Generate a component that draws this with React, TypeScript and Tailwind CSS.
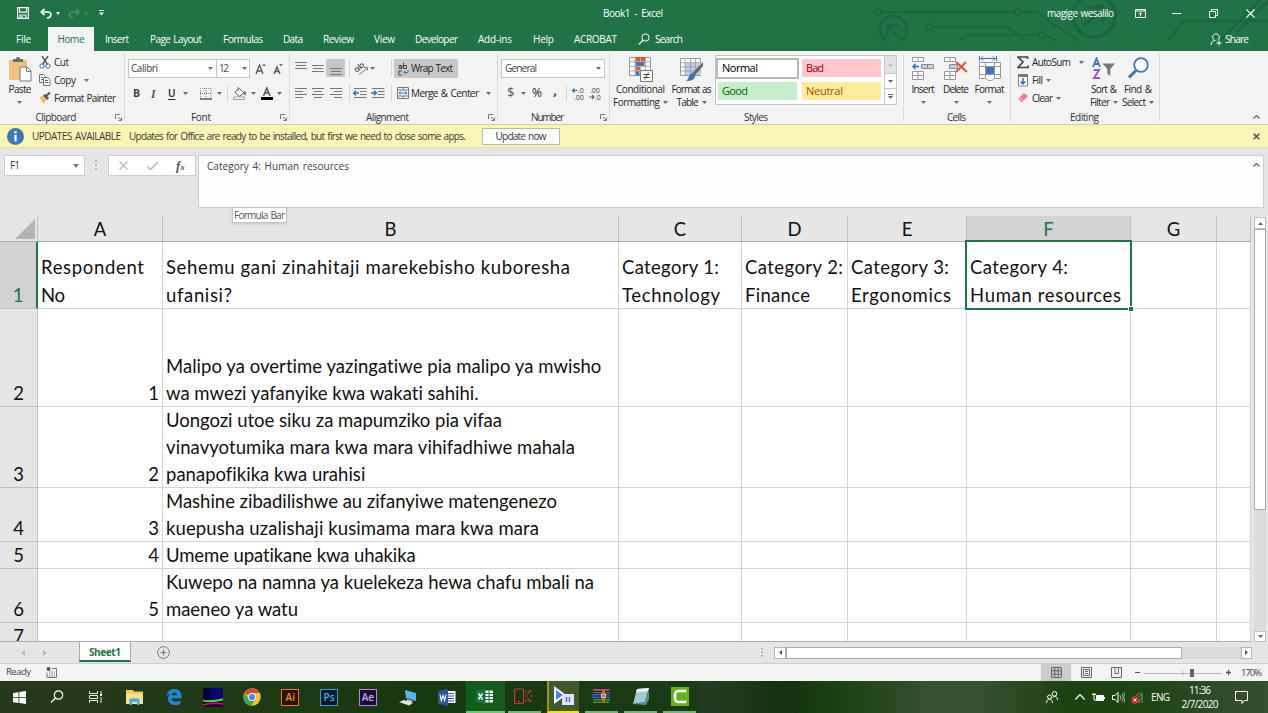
import { useLayoutEffect, useRef, type ReactNode } from "react";

const UI = "font-['Open_Sans','Noto_Sans',sans-serif]";

/** Single-line text whose tracking is adjusted so that it spans `w` pixels. */
function Fit({ w, children, className = "" }: { w: number; children: string; className?: string }) {
  const ref = useRef<HTMLSpanElement>(null);
  useLayoutEffect(() => {
    const el = ref.current;
    if (!el) return;
    el.style.letterSpacing = "0px";
    el.style.marginRight = "0px";
    const natural = el.getBoundingClientRect().width;
    const tracking = (w - natural) / Math.max(1, children.length - 1);
    if (children.length > 1) {
      el.style.letterSpacing = `${tracking}px`;
      el.style.marginRight = `${-tracking}px`;
    }
  }, [w, children]);
  return (
    <span ref={ref} className={`inline-block w-max shrink-0 whitespace-pre ${className}`}>
      {children}
    </span>
  );
}

function Svg({ w, h, children, className = "" }: { w: number; h: number; children: ReactNode; className?: string }) {
  return (
    <svg width={w} height={h} viewBox={`0 0 ${w} ${h}`} fill="none" className={`shrink-0 ${className}`}>
      {children}
    </svg>
  );
}

function Caret({ className = "" }: { className?: string }) {
  return (
    <Svg w={5} h={3} className={className}>
      <path d="M0 0h5L2.500 3z" fill="#6a6a6a" />
    </Svg>
  );
}

function Launcher() {
  return (
    <Svg w={7} h={7} className="absolute right-[3px] bottom-[3px]">
      <path d="M.5 5V.5H5M3 3l3 3M6.500 3.500v3h-3" stroke="#777" />
    </Svg>
  );
}

function Group({ className, label, w, launcher, children }: { className: string; label: string; w: number; launcher?: boolean; children: ReactNode }) {
  return (
    <section className={`relative flex h-[73px] shrink-0 flex-col ${className}`}>
      <div className="flex h-[59px] w-full">{children}</div>
      <div className={`flex h-[14px] items-center justify-center text-[#333] ${launcher ? "pr-[13px]" : "pr-[2px]"}`}>
        <Fit w={w}>{label}</Fit>
      </div>
      {launcher && <Launcher />}
      <div className="absolute top-[3px] right-0 h-[67px] w-px bg-[#dadada]" />
    </section>
  );
}

const Sep = ({ className = "" }: { className?: string }) => <div className={`h-[17px] w-px shrink-0 bg-[#d5d5d5] ${className}`} />;

/* ---------- title bar and tabs ---------- */

function Circuit() {
  return (
    <svg width="408" height="51" viewBox="0 0 408 51" fill="none" className="absolute top-0 right-0" stroke="#1d663d" strokeWidth="2">
      <circle cx="18" cy="12" r="3" />
      <path d="M21 12h134M161 12h12c8 0 12 5 16 9l30 20" />
      <circle cx="158" cy="12" r="3" />
      <path d="M26 41a13.500 13.500 0 1 1 15 0" strokeWidth="3" />
      <path d="M40 38 28 26M27 36V25h11" strokeWidth="3" />
      <circle cx="70" cy="27" r="3" />
      <path d="M73 27h73l20 13M100 40l8-5h71M185 35l12 6" />
      <circle cx="182" cy="35" r="3" />
      <circle cx="234" cy="16" r="21" strokeWidth="4" />
      <path d="m224 26 18-18M229 7h14v14" strokeWidth="4" />
      <path d="m307 41 17-20h84M360 41l40-41M378 31l30-30" strokeWidth="2.500" />
    </svg>
  );
}

const tabs: [string, number, string][] = [
  ["Insert", 24, "ml-[11px]"],
  ["Page Layout", 52, "ml-[21px]"],
  ["Formulas", 40, "ml-[21px]"],
  ["Data", 20, "ml-[20px]"],
  ["Review", 31, "ml-[20px]"],
  ["View", 21, "ml-[20px]"],
  ["Developer", 43, "ml-[20px]"],
  ["Add-ins", 34, "ml-[20px]"],
  ["Help", 21, "ml-[21px]"],
  ["ACROBAT", 43, "ml-[20px]"],
];

function TitleArea() {
  return (
    <header className="relative h-[51px] bg-[#217346] text-white">
      <Circuit />
      <div className="relative flex h-[26px] items-center pl-[17px]">
        <Svg w={12} h={12}>
          <path d="M.6.6h10.800v10.800H.6zM2.500.6v4.500h7V.6M3 11.400V8h6v3.400M5 9v2" stroke="#fff" strokeWidth="1.200" />
        </Svg>
        <Svg w={13} h={11} className="ml-[11px]">
          <path d="M4.500.8 1.300 4l3.200 3.200M1.500 4h6.300c4.500 0 4 5.500-.8 6" stroke="#fff" strokeWidth="1.700" />
        </Svg>
        <Svg w={4} h={3} className="ml-[3px]"><path d="M0 0h4L2 3z" fill="#fff" /></Svg>
        <Svg w={12} h={11} className="ml-[8px]">
          <path d="M8 .8 11 4 8 7.200M11 4H5C0 4 1 9 5 10" stroke="#4c8d68" strokeWidth="1.500" />
        </Svg>
        <Svg w={4} h={3} className="ml-[4px]"><path d="M0 0h4L2 3z" fill="#4c8d68" /></Svg>
        <Svg w={5} h={6} className="ml-[11px]"><path d="M0 .5h5" stroke="#fff" /><path d="M0 2.500h5L2.500 5.500z" fill="#fff" /></Svg>
        <div className="ml-[499px] text-[10px]"><Fit w={60}>Book1  -  Excel</Fit></div>
        <div className="ml-[384px] text-[10px] [word-spacing:1px]"><Fit w={67}>magige wesalilo</Fit></div>
        <Svg w={11} h={9} className="ml-[21px]">
          <path d="M.5.5h10v8H.5zM.5 2h10M5.500 7.500V4M4 5.200l1.500-1.500L7 5.200" stroke="#fff" />
        </Svg>
        <Svg w={9} h={9} className="ml-[26px]"><path d="M0 4.500h9" stroke="#fff" /></Svg>
        <Svg w={9} h={9} className="ml-[28px]"><path d="M.5 2.500h6v6h-6zM2.500 2.500v-2h6v6h-2" stroke="#fff" /></Svg>
        <Svg w={9} h={9} className="ml-[28px]"><path d="m.5.5 8 8m0-8-8 8" stroke="#fff" strokeWidth="1.100" /></Svg>
      </div>
      <nav className="relative mt-px flex h-[24px] items-center text-[10px] [word-spacing:1px]">
        <div className="ml-[16px]"><Fit w={15}>File</Fit></div>
        <div className="ml-[17px] flex h-full w-[46px] items-center justify-center bg-[#f3f3f3] text-[#217346]"><Fit w={27}>Home</Fit></div>
        {tabs.map(([t, w, ml]) => (
          <div key={t} className={ml}><Fit w={w}>{t}</Fit></div>
        ))}
        <Svg w={12} h={12} className="ml-[21px]">
          <circle cx="7.500" cy="4.500" r="3.600" stroke="#fff" /><path d="M5 7.200.8 11.400" stroke="#fff" strokeWidth="1.300" />
        </Svg>
        <div className="ml-[5px]"><Fit w={28}>Search</Fit></div>
        <Svg w={12} h={13} className="ml-[527px]">
          <path d="M5 7.500a3.400 3.400 0 1 1 2.500-.2M1 12c0-3 2-4.500 4.500-4.500M9 7.500v5M6.500 10h5" stroke="#fff" />
        </Svg>
        <div className="ml-[3px]"><Fit w={24}>Share</Fit></div>
      </nav>
    </header>
  );
}

/* ---------- ribbon ---------- */

function ClipboardGroup() {
  return (
    <Group className="w-[125px]" label="Clipboard" w={41} launcher>
      <div className="flex w-[38px] flex-col items-center pt-[6px] pl-[2px]">
        <Svg w={24} h={25}>
          <path d="M1 3h18v20H1z" fill="#eec27a" />
          <path d="M5 5V2h3a2 2 0 0 1 4 0h3v3z" fill="#6b6b6b" />
          <path d="M12 10h7l4 4v10H12z" fill="#fff" stroke="#777" /><path d="M18.500 10v4.500H23" stroke="#777" />
        </Svg>
        <div className="flex h-[15px] items-center"><Fit w={23}>Paste</Fit></div>
        <Caret className="mt-[4px] mr-[1px]" />
      </div>
      <div className="flex flex-col pt-[2px]">
        <div className="flex h-[18px] items-center">
          <Svg w={16} h={13}>
            <path d="m4 0 5.500 8.500M10 0 4.500 8.500" stroke="#555" strokeWidth="1.400" />
            <circle cx="4" cy="10" r="2.200" stroke="#3d7ab8" /><circle cx="10" cy="10" r="2.200" stroke="#3d7ab8" />
          </Svg>
          <Fit w={15} className="pt-px">Cut</Fit>
        </div>
        <div className="flex h-[18px] items-center">
          <Svg w={16} h={12}>
            <path d="M1.500.5h4l2 2v6h-6z" fill="#fff" stroke="#777" /><path d="M5.500 3.500h4l2.500 2v6H5.500z" fill="#fff" stroke="#777" />
            <path d="M3 3.500h2M3 5.500h2M7 6.500h3M7 8.500h3.500" stroke="#3d7ab8" />
          </Svg>
          <Fit w={22} className="pt-px">Copy</Fit>
          <Caret className="ml-[8px]" />
        </div>
        <div className="flex h-[18px] items-center">
          <Svg w={16} h={12}>
            <path d="m1.500 5 4-1 3.500 3-3.500 5z" fill="#eeb866" /><path d="m5 3.500 2-1.500 4 4-1.500 2z" fill="#555" /><path d="m8 4 4-3.500" stroke="#555" strokeWidth="2" />
          </Svg>
          <Fit w={62} className="pt-px">Format Painter</Fit>
        </div>
      </div>
    </Group>
  );
}

function FontGroup() {
  return (
    <Group className="w-[165px]" label="Font" w={20} launcher>
      <div className="flex flex-col">
        <div className="mt-[8px] flex h-[19px] items-center pl-[3px]">
          <div className="flex h-full w-[89px] items-center justify-between border border-[#c6c6c6] bg-white px-[2px] text-[#444]">
            <Fit w={27}>Calibri</Fit><Caret className="mr-[1px]" />
          </div>
          <div className="-ml-px flex h-full w-[34px] items-center justify-between border border-[#c6c6c6] bg-white px-[2px] text-[#444]">
            <Fit w={10}>12</Fit><Caret />
          </div>
          <Svg w={11} h={12} className="ml-[5px]">
            <path d="m1 11 3.500-9L8 11M2.200 8h4.600" stroke="#555" strokeWidth="1.300" /><path d="m7 3 2-2.500L11 3z" fill="#3d7ab8" />
          </Svg>
          <Svg w={10} h={12} className="ml-[7px]">
            <path d="m1 11 3-7 3 7M2 8.500h4" stroke="#555" strokeWidth="1.300" /><path d="m6 1 2 2.500L10 1z" fill="#3d7ab8" />
          </Svg>
        </div>
        <div className="mt-[7px] flex h-[17px] items-center">
          <span className="ml-[8px] w-[8px] text-[10.500px] font-bold text-[#444]">B</span>
          <span className="ml-[10px] w-[6px] font-['Liberation_Serif',serif] text-[12px] font-bold text-[#555] italic">I</span>
          <span className="ml-[11px] w-[8px] text-[10px] font-semibold underline underline-offset-2">U</span>
          <Caret className="ml-[7px]" />
          <Svg w={12} h={12} className="ml-[12px]">
            <path d="M.5 11V.5h10.500V11M6 0v11M0 5.500h11" stroke="#888" strokeDasharray="1 1" /><path d="M0 11h12" stroke="#444" strokeWidth="1.300" />
          </Svg>
          <Caret className="ml-[5px]" />
          <Sep className="ml-[5px]" />
          <Svg w={14} h={13} className="ml-[5px]">
            <path d="m2 5 4.500-3.500L11 6 6 9.500z" stroke="#666" fill="#fff" /><path d="M5 0v4" stroke="#666" /><path d="M11 3.500c2 1.500 2.500 3 2 5l-2-1z" fill="#3d7ab8" />
            <path d="M.5 10h11v2.500H.5z" stroke="#999" fill="#fff" />
          </Svg>
          <Caret className="ml-[4px]" />
          <Svg w={12} h={13} className="ml-[5px]">
            <path d="m2.500 9 3.300-8L9 9M3.700 6h4.200" stroke="#555" strokeWidth="1.500" /><path d="M0 10h12v3H0z" fill="#000" />
          </Svg>
          <Caret className="ml-[4px]" />
        </div>
      </div>
    </Group>
  );
}

function Lines({ d }: { d: string }) {
  return <Svg w={12} h={11}><path d={d} stroke="#777" /></Svg>;
}

function Indent({ flip }: { flip?: boolean }) {
  return (
    <Svg w={14} h={11}>
      <path d="M1 .5h12.500M7 3.500h6.500M7 6.500h6.500M1 9.500h12.500" stroke="#777" />
      <path d={flip ? "M0 5h5M3 2.800 5.500 5 3 7.200" : "M6 5H1M3 2.800.5 5 3 7.200"} stroke="#2b72b8" strokeWidth="1.400" />
    </Svg>
  );
}

function AlignmentGroup() {
  return (
    <Group className="w-[208px]" label="Alignment" w={43} launcher>
      <div className="grid w-[59px] grid-cols-[17px_17px_19px] grid-rows-[18px_18px] content-start gap-y-[6px] pt-[8px] pl-[2px]">
        <div className="flex items-center justify-center pb-[5px]"><Lines d="M0 2.500h12M1 5.500h10M0 8.500h12" /></div>
        <div className="flex items-center justify-center"><Lines d="M0 2.500h12M1 5.500h10M0 8.500h12" /></div>
        <div className="flex items-center justify-center bg-[#c8c8c8] pt-[6px]"><Lines d="M0 2.500h12M1 5.500h10M0 8.500h12" /></div>
        <div className="flex items-center justify-center"><Lines d="M0 1.500h12M0 4.500h8M0 7.500h12M0 10.500h8" /></div>
        <div className="flex items-center justify-center"><Lines d="M0 1.500h12M2 4.500h8M0 7.500h12M2 10.500h8" /></div>
        <div className="flex items-center justify-center"><Lines d="M0 1.500h12M4 4.500h8M0 7.500h12M4 10.500h8" /></div>
      </div>
      <div className="flex w-[42px] flex-col pt-[8px]">
        <div className="flex h-[18px] items-center">
          <Sep />
          <Svg w={14} h={13} className="ml-[4px]">
            <g transform="rotate(-40 5 6)" stroke="#555">
              <circle cx="2.500" cy="6" r="1.800" /><path d="M4.500 4v4" /><path d="M6.500 2v6" /><circle cx="8.500" cy="6" r="1.800" />
            </g>
            <path d="m5 12.500 8-6M10 5.500h3.300v3" stroke="#777" />
          </Svg>
          <Caret className="ml-[2px]" />
        </div>
        <div className="mt-[7px] flex h-[18px] items-center">
          <Sep />
          <div className="ml-[3px] flex gap-[4px]"><Indent /><Indent flip /></div>
        </div>
      </div>
      <div className="flex flex-col pt-[8px]">
        <div className="flex">
          <Sep className="mr-[2px]" />
          <div className="flex h-[19px] w-[64px] items-center bg-[#c8c8c8] pl-[4px]">
            <Svg w={11} h={14}>
              <path d="M.5 3.500h3.500v3h-3v-1.500h3M5.500.500v6h3V3.500h-3M4 9H.8v4H4" stroke="#444" />
              <path d="M10 8v2.500H6M7.500 8.800 5.800 10.500l1.700 1.700" stroke="#2b72b8" />
            </Svg>
            <div className="ml-[2px] text-[#222]"><Fit w={42} className="[word-spacing:1px]">Wrap Text</Fit></div>
          </div>
        </div>
        <div className="mt-[6px] flex h-[18px] items-center">
          <Sep className="mr-[6px]" />
          <Svg w={12} h={12} className="-ml-px">
            <path d="M.5.500h11v11H.5zM.5 3h11M.5 9h11M6 .5V3M6 9v2.500" stroke="#777" /><path d="M2 6h8M3.500 4.500 2 6l1.500 1.500M8.500 4.500 10 6 8.500 7.500" stroke="#2b72b8" />
          </Svg>
          <div className="ml-[2px] pt-px"><Fit w={68}>Merge &amp; Center</Fit></div>
          <Caret className="ml-[7px]" />
        </div>
      </div>
    </Group>
  );
}

function Decimals({ less }: { less?: boolean }) {
  return (
    <Svg w={13} h={13} className="overflow-visible">
      <text x={less ? 1 : 6} y="6" fontSize="7" fontFamily="Open Sans" fill="#444">{less ? ".00" : ".0"}</text>
      <text x={less ? 6 : 2} y="12.500" fontSize="7" fontFamily="Open Sans" fill="#444">{less ? ".0" : ".00"}</text>
      <path d={less ? "M0 10h5M3 8l2 2-2 2" : "M5.500 3.500h-5M2.500 1.500l-2 2 2 2"} stroke="#2b72b8" strokeWidth="1.200" />
    </Svg>
  );
}

function NumberGroup() {
  return (
    <Group className="w-[112px]" label="Number" w={33} launcher>
      <div className="flex flex-col pt-[8px] pl-[3px]">
        <div className="flex h-[19px] w-[104px] items-center justify-between border border-[#c6c6c6] bg-white px-[3px] text-[#444]">
          <Fit w={32}>General</Fit><Caret />
        </div>
        <div className="mt-[6px] flex h-[18px] items-center pl-[6px]">
          <span className="w-[8px] text-[13px] text-[#555]">$</span>
          <Caret className="ml-[6px]" />
          <span className="ml-[6px] w-[13px] text-[12px]">%</span>
          <span className="ml-[8px] w-[5px] pb-[7px] text-[15px] font-bold text-[#555]">,</span>
          <Sep className="ml-[8px]" />
          <div className="ml-[5px] flex gap-[4px]"><Decimals /><Decimals less /></div>
        </div>
      </div>
    </Group>
  );
}

function StyleCell({ className, w, children }: { className: string; w: number; children: string }) {
  return <div className={`flex items-center text-[11px] ${className}`}><Fit w={w}>{children}</Fit></div>;
}

function StylesGroup() {
  return (
    <Group className="w-[294px]" label="Styles" w={24}>
      <div className="flex w-[61px] flex-col items-center pt-[6px]">
        <Svg w={24} h={25}>
          <path d="M.5.500h21v18H.5z" fill="#fff" stroke="#999" />
          <path d="M6.500 0h5v4.500h-5zM6.500 9.500h5v4h-5z" fill="#e0593a" /><path d="M6.500 5h9v4h-9z" fill="#3c78b4" /><path d="M6.500 14h4v4.500h-4z" fill="#3c78b4" /><path d="M12 0h4v4.500h-4z" fill="#e0593a" />
          <path d="M0 4.700h22M0 9.300h22M0 14h22M6 0v19M16.500 0v19" stroke="#999" strokeWidth=".8" />
          <path d="M11.500 13.500h12v11h-12z" fill="#fff" stroke="#777" /><path d="M14.500 17.500h6M14.500 20.500h6M19.500 15.500l-4 7" stroke="#444" />
        </Svg>
        <div className="mt-px flex h-[13px] items-center"><Fit w={49}>Conditional</Fit></div>
        <div className="flex h-[13px] items-center gap-[3px]"><Fit w={47}>Formatting</Fit><Caret /></div>
      </div>
      <div className="flex w-[41px] flex-col items-center pt-[6px]">
        <Svg w={24} h={25}>
          <path d="M.5 1.500h20v17H.5z" fill="#fff" stroke="#999" /><path d="M5 6h16v12H5z" fill="#b9d1e8" />
          <path d="M0 5.700h21M0 10h21M0 14h21M5 1v18M10.500 1v18M15.500 1v18" stroke="#999" strokeWidth=".8" />
          <path d="M23 5v4l-8 9-2.500-2z" fill="#666" /><path d="M12 16c3 0 4 2 2.500 5-2 3-6 3-8.500 3 3-1.500 2-6 6-8z" fill="#3c78b4" />
        </Svg>
        <div className="mt-px flex h-[13px] items-center"><Fit w={40}>Format as</Fit></div>
        <div className="flex h-[13px] items-center gap-[3px]"><Fit w={22}>Table</Fit><Caret /></div>
      </div>
      <div className="mt-[4px] ml-[3px] flex h-[50px] w-[182px] border border-[#c6c6c6] bg-white">
        <div className="grid grid-cols-[83px_79px] grid-rows-[21px_18px] gap-x-[3px] gap-y-[3px] pt-[2px]">
          <StyleCell w={36} className="border-2 border-[#b9b9b9] bg-white pl-[4px] text-black">Normal</StyleCell>
          <StyleCell w={18} className="mt-[1px] h-[18px] bg-[#ffc7ce] pl-[4px] text-[#9c0006]">Bad</StyleCell>
          <StyleCell w={26} className="ml-[2px] w-[79px] bg-[#c6efce] pl-[4px] text-[#006100]">Good</StyleCell>
          <StyleCell w={37} className="bg-[#ffeb9c] pl-[4px] text-[#9c5700]">Neutral</StyleCell>
        </div>
        <div className="ml-auto flex w-[12px] flex-col border-l border-[#c6c6c6]">
          <div className="flex h-[17px] items-center justify-center bg-[#e3e3e3]"><Svg w={5} h={3}><path d="M0 3h5L2.500 0z" fill="#bbb" /></Svg></div>
          <div className="flex h-[16px] items-center justify-center border-y border-[#c6c6c6]"><Caret /></div>
          <div className="flex flex-1 flex-col items-center justify-center gap-px"><div className="h-px w-[5px] bg-[#6a6a6a]" /><Caret /></div>
        </div>
      </div>
    </Group>
  );
}

function CellsGroup() {
  return (
    <Group className="w-[107px]" label="Cells" w={19}>
      <div className="flex w-[38px] flex-col items-center pt-[6px]">
        <Svg w={22} h={24}>
          <path d="M.5.500h11v4H.5zM6 .5v4M.5 14.500h11v8H.5zM.5 18.500h11M6 14.500v8" fill="#fff" stroke="#999" />
          <path d="M9.500 7.500h12v4h-12zM15.500 7.500v4" fill="#b9d1e8" stroke="#888" /><path d="M7 9.500H1M3.500 7 1 9.500 3.500 12" stroke="#2b72b8" strokeWidth="1.500" />
        </Svg>
        <div className="mt-[1px] flex h-[15px] items-center"><Fit w={23}>Insert</Fit></div>
        <Caret className="mt-[4px]" />
      </div>
      <div className="flex w-[28px] flex-col items-center pt-[6px]">
        <Svg w={24} h={24}>
          <path d="M.5.500h11v4H.5zM6 .5v4M.5 14.500h11v8H.5zM.5 18.500h11M6 14.500v8" fill="#fff" stroke="#999" />
          <path d="M5.500 7.500h8v4h-8z" fill="#b9d1e8" stroke="#888" /><path d="m12 5 11 10M22 5 12 15" stroke="#dd5532" strokeWidth="2" />
        </Svg>
        <div className="mt-[1px] flex h-[15px] items-center"><Fit w={26}>Delete</Fit></div>
        <Caret className="mt-[4px]" />
      </div>
      <div className="flex w-[39px] flex-col items-center pt-[5px]">
        <Svg w={24} h={26}>
          <path d="M1.500 0v5M18.500 0v5M3 2.500h14M5 .5l-2 2 2 2M15 .5l2 2-2 2" stroke="#2b72b8" />
          <path d="M1.500 6.500h21v16h-6l-3 2h-3l-3-2h-6z" fill="#fff" stroke="#999" /><path d="M1.500 10.500h21M1.500 18.500h21M7.500 6.500v16M16.500 6.500v16" stroke="#999" /><path d="M8 11h8v7H8z" fill="#3c78b4" />
        </Svg>
        <div className="flex h-[15px] items-center"><Fit w={30}>Format</Fit></div>
        <Caret className="mt-[4px]" />
      </div>
    </Group>
  );
}

function EditingGroup() {
  return (
    <Group className="w-[149px]" label="Editing" w={29}>
      <div className="flex w-[79px] flex-col pt-[2px] pl-[6px]">
        <div className="flex h-[18px] items-center">
          <Svg w={15} h={13}><path d="M10.500 3V1H1l5 5-5 5.500h10V9.500" stroke="#444" strokeWidth="1.700" /></Svg>
          <Fit w={39} className="pt-px">AutoSum</Fit><Caret className="ml-[8px]" />
        </div>
        <div className="flex h-[18px] items-center">
          <Svg w={15} h={13}><path d="M1.500 1v11h9V1z" fill="#fff" stroke="#888" /><path d="M1 0h10v3H1z" fill="#777" /><path d="M6 4v6M3.700 7.500 6 10l2.300-2.500" stroke="#2b72b8" strokeWidth="1.500" /></Svg>
          <Fit w={11} className="pt-px">Fill</Fit><Caret className="ml-[3px]" />
        </div>
        <div className="flex h-[18px] items-center">
          <Svg w={15} h={12}><path d="m1 7 6-6 4 3-6 6.500z" fill="#e87f92" /><path d="m2.500 5.500 4 3.500" stroke="#fff" strokeWidth=".7" /></Svg>
          <Fit w={21} className="pt-px">Clear</Fit><Caret className="ml-[3px]" />
        </div>
      </div>
      <div className="flex w-[28px] flex-col items-center pt-[6px]">
        <Svg w={24} h={25}>
          <path d="m1 10 3.500-8.500L8 10M2.200 7h4.600" stroke="#3c78b4" strokeWidth="1.800" /><path d="M1.500 13H7l-5 8h6" stroke="#9a56b8" strokeWidth="1.800" />
          <path d="M10.500 6.500H23L18.300 12v7l-3-2.500V12z" fill="#777" />
        </Svg>
        <div className="mt-px flex h-[13px] items-center"><Fit w={26}>Sort &amp;</Fit></div>
        <div className="flex h-[13px] items-center gap-[3px]"><Fit w={20}>Filter</Fit><Caret /></div>
      </div>
      <div className="ml-[4px] flex w-[32px] flex-col items-center pt-[6px]">
        <Svg w={22} h={25}>
          <circle cx="14" cy="8" r="6.800" stroke="#3c78b4" strokeWidth="1.800" fill="#fff" /><path d="m9 13.500-7 7" stroke="#3c78b4" strokeWidth="3" />
        </Svg>
        <div className="mt-px flex h-[13px] items-center"><Fit w={28}>Find &amp;</Fit></div>
        <div className="flex h-[13px] items-center gap-[3px]"><Fit w={24}>Select</Fit><Caret /></div>
      </div>
    </Group>
  );
}

function Ribbon() {
  return (
    <div className="relative flex h-[73px] bg-[#f3f3f3] text-[10px] text-[#262626] [word-spacing:1px]">
      <ClipboardGroup /><FontGroup /><AlignmentGroup /><NumberGroup /><StylesGroup /><CellsGroup /><EditingGroup />
      <Svg w={7} h={4} className="mt-auto mb-[5px] ml-[93px]"><path d="m.5 3.500 3-3 3 3" stroke="#666" strokeWidth="1.300" /></Svg>
    </div>
  );
}

/* ---------- message bar and formula bar ---------- */

function MessageBar() {
  return (
    <div className="flex h-[24px] items-center border-t border-b border-t-[#d6cf9c] border-b-[#e5dfa0] bg-[#fbf5b5] pl-[7px] text-[10px] text-[#3a3a3a] [word-spacing:1px]">
      <Svg w={17} h={17}><circle cx="8.500" cy="8.500" r="8.500" fill="#3f78b6" /><path d="M8.500 3v2.500M8.500 7v6.500" stroke="#fff" strokeWidth="2.200" /></Svg>
      <div className="ml-[8px]"><Fit w={89}>UPDATES AVAILABLE</Fit></div>
      <div className="ml-[8px]"><Fit w={337}>Updates for Office are ready to be installed, but first we need to close some apps.</Fit></div>
      <div className="ml-[16px] flex h-[17px] w-[78px] items-center justify-center border border-[#b8b8b8] bg-[#fdfdfd]"><Fit w={51}>Update now</Fit></div>
      <Svg w={7} h={7} className="mr-[8px] ml-auto"><path d="m.7.700 5.600 5.600m0-5.600L.7 6.300" stroke="#555" strokeWidth="1.600" /></Svg>
    </div>
  );
}

function FormulaBar() {
  return (
    <div className="flex h-[68px] items-start bg-[#e6e6e6] pt-[7px] pl-[4px] text-[10px] text-[#444] [word-spacing:1px]">
      <div className="flex h-[21px] w-[81px] items-center justify-between border border-[#cfcfcf] bg-white pr-[5px] pl-[5px]">
        <Fit w={10}>F1</Fit><Svg w={6} h={4}><path d="M0 0h6L3 4z" fill="#777" /></Svg>
      </div>
      <Svg w={2} h={11} className="mt-[5px] ml-[10px]"><path d="M1 0v11" stroke="#999" strokeWidth="1.500" strokeDasharray="1.500 2.500" /></Svg>
      <div className="ml-[11px] flex h-[21px] w-[88px] items-center border border-[#cfcfcf] bg-white pl-[10px]">
        <Svg w={9} h={9}><path d="m.5.500 8 8m0-8-8 8" stroke="#bbb" strokeWidth="1.300" /></Svg>
        <Svg w={11} h={8} className="ml-[19px]"><path d="m.5 4.500 3 3 7-7" stroke="#bbb" strokeWidth="1.700" /></Svg>
        <span className="ml-[18px] font-['Liberation_Serif',serif] text-[13px] leading-none font-bold text-[#555] italic">f<span className="text-[9px]">x</span></span>
      </div>
      <div className="relative ml-[2px] flex h-[53px] w-[1066px] justify-between border border-[#cfcfcf] bg-[#fdfdfd] pt-[3px] pr-[3px] pl-[8px]">
        <div className="leading-[14px]"><Fit w={142}>Category 4: Human resources</Fit></div>
        <Svg w={7} h={4} className="mt-[4px]"><path d="m.5 3.500 3-3 3 3" stroke="#666" strokeWidth="1.300" /></Svg>
        <div className="absolute top-[51px] left-[33px] z-10 flex h-[16px] w-[55px] items-center justify-center border border-[#c4c4c4] bg-white text-[10px] text-[#555] shadow-sm"><Fit w={51}>Formula Bar</Fit></div>
      </div>
    </div>
  );
}

/* ---------- worksheet ---------- */

type Line = [string, number];
type Row = { n: string; h: string; lead: string; a: Line[]; right?: boolean; cells: Line[][] };

const widths = ["w-[125px]", "w-[456px]", "w-[123px]", "w-[106px]", "w-[119px]", "w-[164px]", "w-[86px]", "w-[34px]"];
const letters = ["A", "B", "C", "D", "E", "F", "G", ""];

const rows: Row[] = [
  {
    n: "1", h: "h-[67px]", lead: "leading-[28px]", a: [["Respondent", 103], ["No", 24]],
    cells: [
      [["Sehemu gani zinahitaji marekebisho kuboresha", 404], ["ufanisi?", 66]],
      [["Category 1:", 97], ["Technology", 98]],
      [["Category 2:", 98], ["Finance", 65]],
      [["Category 3:", 98], ["Ergonomics", 100]],
      [["Category 4:", 98], ["Human resources", 151]],
    ],
  },
  { n: "2", h: "h-[98px]", lead: "leading-[27px]", right: true, a: [["1", 10]], cells: [[["Malipo ya overtime yazingatiwe pia malipo ya mwisho", 436], ["wa mwezi yafanyike kwa wakati sahihi.", 313]]] },
  { n: "3", h: "h-[81px]", lead: "leading-[27px]", right: true, a: [["2", 10]], cells: [[["Uongozi utoe siku za mapumziko pia vifaa", 336], ["vinavyotumika mara kwa mara vihifadhiwe mahala", 409], ["panapofikika kwa urahisi", 199]]] },
  { n: "4", h: "h-[54px]", lead: "leading-[27px]", right: true, a: [["3", 10]], cells: [[["Mashine zibadilishwe au zifanyiwe matengenezo", 391], ["kuepusha uzalishaji kusimama mara kwa mara", 373]]] },
  { n: "5", h: "h-[27px]", lead: "leading-[27px]", right: true, a: [["4", 10]], cells: [[["Umeme upatikane kwa uhakika", 250]]] },
  { n: "6", h: "h-[54px]", lead: "leading-[27px]", right: true, a: [["5", 10]], cells: [[["Kuwepo na namna ya kuelekeza hewa chafu mbali na", 428], ["maeneo ya watu", 132]]] },
  { n: "7", h: "h-[27px]", lead: "leading-[27px]", a: [], cells: [] },
];

function Sheet() {
  return (
    <div className="flex h-[426px] bg-[#e6e6e6] font-['Lato','Carlito',sans-serif] text-[18.500px] text-[#111]">
      <div className="h-[426px] w-[1251px] overflow-hidden border-b border-[#ababab]">
        <div className="flex h-[26px] border-b border-[#ababab]">
          <div className="flex w-[38px] items-end justify-end border-r border-[#bfbfbf] pr-[2px] pb-[2px]">
            <Svg w={20} h={20}><path d="M20 0v20H0z" fill="#b4b4b4" /></Svg>
          </div>
          {letters.map((l, i) => (
            <div key={i} className={`flex shrink-0 items-center justify-center border-r border-[#bfbfbf] pt-[2px] ${widths[i]} ${l === "F" ? "bg-[#d2d2d2] text-[#217346]" : ""}`}>{l}</div>
          ))}
        </div>
        {rows.map((r) => (
          <div key={r.n} className={`flex ${r.h} ${r.lead}`}>
            <div className={`flex w-[38px] shrink-0 items-end justify-center border-b border-[#bfbfbf] ${r.n === "1" ? "border-r-2 border-r-[#217346] bg-[#d2d2d2] text-[#217346]" : "border-r border-r-[#bfbfbf]"}`}><span className="-mb-px">{r.n}</span></div>
            {letters.map((_, c) => {
              const lines = c === 0 ? r.a : (r.cells[c - 1] ?? []);
              const selected = r.n === "1" && c === 5;
              return (
                <div key={c} className={`relative flex shrink-0 flex-col justify-end border-r border-b border-[#d4d4d4] bg-white ${c === 0 && r.right ? "items-end pr-[3px]" : "items-start pl-[3px]"} ${widths[c]}`}>
                  <div className="-mb-px flex w-max flex-col items-start">
                    {lines.map(([t, w]) => (
                      <Fit key={t} w={w}>{t}</Fit>
                    ))}
                  </div>
                  {selected && (
                    <div className="absolute -top-[2px] -right-[2px] -bottom-[2px] -left-[2px] z-10 border-2 border-[#217346]">
                      <div className="absolute -right-[3px] -bottom-[3px] h-[5px] w-[5px] border-t border-l border-white bg-[#217346]" />
                    </div>
                  )}
                </div>
              );
            })}
          </div>
        ))}
      </div>
      <div className="ml-[3px] flex w-[12px] flex-col items-stretch pt-px">
        <div className="flex h-[12px] items-center justify-center border border-[#c0c0c0] bg-white"><Svg w={5} h={3}><path d="M0 3h5L2.500 0z" fill="#666" /></Svg></div>
        <div className="h-[281px] border border-[#ababab] bg-white" />
        <div className="flex-1 bg-[#dcdcdc]" />
        <div className="flex h-[11px] items-center justify-center border border-[#c0c0c0] bg-white"><Svg w={5} h={3}><path d="M0 0h5L2.500 3z" fill="#666" /></Svg></div>
      </div>
    </div>
  );
}

function SheetTabs() {
  return (
    <div className="flex h-[22px] items-center border-b border-[#cfcfcf] bg-[#e6e6e6] text-[10px]">
      <Svg w={4} h={6} className="ml-[21px]"><path d="M4 0v6L0 3z" fill="#bbb" /></Svg>
      <Svg w={4} h={6} className="ml-[18px]"><path d="M0 0v6l4-3z" fill="#bbb" /></Svg>
      <div className="ml-[32px] flex h-[20px] w-[52px] items-center justify-center self-start border-x border-b-2 border-x-[#ababab] border-b-[#217346] bg-white pt-[3px] font-bold text-[#217346]"><Fit w={32}>Sheet1</Fit></div>
      <Svg w={13} h={13} className="ml-[26px]"><circle cx="6.500" cy="6.500" r="5.900" stroke="#777" /><path d="M6.500 3.500v6M3.500 6.500h6" stroke="#777" strokeWidth="1.200" /></Svg>
      <Svg w={2} h={9} className="ml-[591px]"><path d="M1 0v9" stroke="#999" strokeWidth="1.500" strokeDasharray="1.500 2" /></Svg>
      <div className="ml-[11px] flex h-[12px] items-stretch">
        <div className="flex w-[12px] items-center justify-center border border-[#b5b5b5] bg-white"><Svg w={3} h={5}><path d="M3 0v5L0 2.500z" fill="#555" /></Svg></div>
        <div className="w-[396px] border border-[#ababab] bg-white" />
        <div className="w-[59px] bg-[#dcdcdc]" />
        <div className="flex w-[11px] items-center justify-center border border-[#b5b5b5] bg-white"><Svg w={3} h={5}><path d="M0 0v5l3-2.500z" fill="#555" /></Svg></div>
      </div>
    </div>
  );
}

function StatusBar() {
  return (
    <div className="flex h-[17px] items-center bg-[#f3f3f3] pl-[6px] text-[9.500px] text-[#444]">
      <Fit w={25}>Ready</Fit>
      <Svg w={11} h={11} className="ml-[15px]"><circle cx="2.500" cy="2" r="2" fill="#555" /><path d="M6 1.500h4.500v9H1V5.500" stroke="#777" /><path d="M3 5h6M3 7h6M3 9h6" stroke="#777" strokeDasharray="1.500 1" /></Svg>
      <div className="ml-[984px] flex h-full w-[30px] items-center justify-center bg-[#cbcbcb]">
        <Svg w={11} h={11}><path d="M.5.500h10v10H.5zM.5 3.800h10M.5 7.200h10M3.800.500v10M7.200.500v10" stroke="#666" /></Svg>
      </div>
      <Svg w={11} h={11} className="ml-[10px]"><path d="M.5.500h10v10H.5zM2.500 2.500h6v6h-6zM4 4.500h3M4 6.500h3" stroke="#666" /></Svg>
      <Svg w={11} h={11} className="ml-[19px]"><path d="M.5 10.500V.5h10v10M.5 10.500h10M4 .5v6h3.500v-6" stroke="#666" /></Svg>
      <div className="ml-[13px] h-[1.500px] w-[5px] bg-[#555]" />
      <Svg w={78} h={10} className="ml-[4px]"><path d="M0 5.500h78M39 3v5" stroke="#b5b5b5" /><path d="M46 1h4v8h-4z" fill="#666" /></Svg>
      <Svg w={5} h={5} className="ml-[4px]"><path d="M0 2.500h5M2.500 0v5" stroke="#555" strokeWidth="1.300" /></Svg>
      <div className="ml-[10px] pt-px"><Fit w={21}>170%</Fit></div>
    </div>
  );
}

/* ---------- taskbar ---------- */

function Adobe({ children, className }: { children: string; className: string }) {
  return <div className={`mr-[2px] flex h-[17px] w-[18px] items-center justify-center border-[1.500px] text-[10px] leading-none font-semibold ${className}`}>{children}</div>;
}

const apps: { icon: ReactNode; tile?: string }[] = [
  { icon: <Svg w={13} h={13}><path d="m0 2 5.500-.8v5H0zM6.300 1 13 0v6.200H6.300zM0 7h5.500v5L0 11.200zM6.300 7H13v6l-6.700-1z" fill="#fff" /></Svg> },
  { icon: <Svg w={14} h={14} className="mr-[3px]"><circle cx="8.500" cy="5" r="4.200" stroke="#fff" strokeWidth="1.200" /><path d="m5.500 8-4.500 4.500" stroke="#fff" strokeWidth="1.200" /></Svg> },
  { icon: <Svg w={14} h={12} className="mr-[3px]"><path d="M.5 0v2.500h8V0M.5 12V9.500h8V12M.5 4.500h8v3h-8zM12 0v3M12 6v6" stroke="#eee" /><path d="M11 3h2v2h-2z" fill="#fff" /></Svg> },
  { icon: <Svg w={18} h={15} className="mr-[1px]"><path d="M0 0h7l1 1.500h9V14H0z" fill="#f3cb5c" /><path d="M0 4h17v10H0z" fill="#fbe08c" /><path d="M3.500 15V9.500a1 1 0 0 1 1-1h8a1 1 0 0 1 1 1V15H11v-3H6v3z" fill="#45aee0" /></Svg> },
  { icon: <Svg w={16} h={16} className="mr-[1px]"><path d="M.5 7.500C1 3 4 0 8.300 0c4.500 0 7.200 3 7.200 7v2.300H5.500c0 2.300 2 3.400 4.300 3.400 1.800 0 3.500-.5 4.700-1.200v3.200c-1.400.8-3.300 1.300-5.300 1.300-4.500 0-7.200-2.700-7.200-6.300 0-2.400 1.300-4.300 3.300-5.400C3.500 4.700 1.700 5.700.5 7.500zM5.600 6.300h5.500c0-1.900-1.100-2.800-2.600-2.800S5.800 4.600 5.600 6.300z" fill="#1c88dc" /></Svg> },
  { icon: <Svg w={20} h={19} className="mr-[2px]"><path d="M0 0h20v19H0z" fill="#0a0770" /><path d="M0 0h8v12H0z" fill="#06043c" /><path d="M0 12c7 2 14 0 20-1v8H0z" fill="#1a0530" /><path d="M0 12.500c7 2 13 0 20-1" stroke="#54d84a" strokeWidth="1.800" /><path d="M0 17c7-2 12-3 20-1" stroke="#b8165a" strokeWidth="1.800" /></Svg> },
  { icon: <Svg w={18} h={18} className="mr-[1px]"><circle cx="9" cy="9" r="8.700" fill="#f1c62f" /><path d="M1.500 4.700A8.700 8.700 0 0 1 16.600 5H9a4 4 0 0 0-3.700 2.600z" fill="#dd4437" /><path d="M1.400 4.800A8.700 8.700 0 0 0 8.500 17.700L12 11.500 9 13a4 4 0 0 1-3.600-2.200z" fill="#35a853" /><circle cx="9" cy="9" r="3.900" fill="#fff" /><circle cx="9" cy="9" r="3.100" fill="#4587f0" /></Svg> },
  { icon: <Adobe className="border-[#e87a22] bg-[#2a0f02] text-[#f58a2a]">Ai</Adobe> },
  { icon: <Adobe className="border-[#2ba3d6] bg-[#03192b] text-[#38b6ec]">Ps</Adobe> },
  { icon: <Adobe className="border-[#b48ae0] bg-[#1c0c33] text-[#cfa5f5]">Ae</Adobe> },
  { icon: <Svg w={18} h={17}><path d="m6 1 11 3v8L7 9z" fill="#58b5ec" /><path d="m8 10 6 2-2 2-4-1z" fill="#ccc" /><path d="M0 13l5-2 9 3-4 2.500z" fill="#e4e4e4" /></Svg> },
  { icon: <Svg w={18} h={17}><path d="M9 2h8.500v12H9z" fill="#fff" /><path d="M10 4.500h6M10 7h6M10 9.500h6M10 12h6" stroke="#2b579a" /><path d="m0 2 10-2v17L0 15z" fill="#2b579a" /><path d="m2 5.500 1.300 6L5 6.500l1.700 5L8 5.500" stroke="#fff" strokeWidth="1.100" /></Svg> },
  { tile: "bg-[#135c19] border-b-2 border-[#74c47a]", icon: <Svg w={18} h={15}><path d="M9 1.500h8v12H9z" fill="#fff" /><path d="M9 4.500h8M9 7.500h8M9 10.500h8M13 1.500v12" stroke="#1d7044" /><path d="m0 1.500 9.500-1.500v15L0 13.500z" fill="#1d7044" /><path d="m2.500 4.500 4 6M6.500 4.500l-4 6" stroke="#fff" strokeWidth="1.400" /></Svg> },
  { tile: "mx-[3px] border-b-2 border-[#74b878]", icon: <Svg w={20} h={17}><rect x=".6" y="1" width="9" height="14.500" rx="1" stroke="#c23c48" strokeWidth="1.200" /><path d="M4 13.500h2M11.500 8h2.500M16 8h3M13.500 5.500l4-2.500M13.500 10.500l4 2.500M12 4.500V2M12 11.500V14M15 3.500l1-2M15 12.500l1 2" stroke="#c23c48" strokeWidth="1.100" /></Svg> },
  { tile: "mr-[3px] ml-[3px] border-b-2 border-l-2 border-b-[#f6e600] border-l-[#9a9418] bg-[#40592f]", icon: <Svg w={20} h={20}><path d="M0 0l12 9L0 18z" fill="#fff" /><path d="M2 4l7 5-7 5z" fill="#2f8be0" /><path d="M8 8h12v11H8z" fill="#dfe3fa" /><path d="M12.500 11v5M15.500 11v5" stroke="#5368c8" strokeWidth="1.400" /></Svg> },
  { tile: "mx-[3px] border-b-2 border-[#74b878]", icon: <Svg w={19} h={14}><path d="M1 0h16l1.500 4H2z" fill="#b04484" /><path d="M0 5h18v4H0z" fill="#3c62c8" /><path d="M2 10h16.500L17 14H1z" fill="#4b9a3a" /><path d="M2 2.500h16M0 7h18M2 12h16" stroke="#171717" /><path d="M10 0h3v14h-3z" fill="#a57034" /><path d="M9.500 5h4v3.500h-4z" stroke="#f0d890" /></Svg> },
  { tile: "mx-[3px] border-b-2 border-[#74b878]", icon: <Svg w={18} h={17}><path d="m5 1 12-1-4 14L1 16z" fill="#9dcdd4" /><path d="m5 1 12-1-1 3-12 1.500z" fill="#e7f2f2" /><path d="m1 16 12-2 4-12v9l-3 6z" fill="#5d8f96" /></Svg> },
  { tile: "mx-[3px] border-b-2 border-[#74b878]", icon: <Svg w={18} h={19}><path d="M0 0h18v19H0z" fill="#64b31c" /><path d="M14 5.500V4H7.500A3.500 3.500 0 0 0 4 7.500v4A3.500 3.500 0 0 0 7.500 15H14v-1.500" stroke="#fff" strokeWidth="2.600" /></Svg> },
];

function Taskbar() {
  return (
    <div className="flex h-[32px] items-center bg-linear-to-r from-[#26391a] via-[#16390f] via-35% to-[#243c22] text-[10px] text-white">
      <div className="grid h-full w-[699px] shrink-0 grid-cols-18">
        {apps.map((a, i) => (
          <div key={i} className={`flex items-center justify-center ${a.tile ?? ""}`}>{a.icon}</div>
        ))}
      </div>
      <div className="flex h-full flex-1 items-center bg-[linear-gradient(90deg,#243c22_0%,#14320f_15%,#1a4210_25%,#35502f_40%,#35502f_50%,#1c420f_65%,#1c4510_78%,#2d4a27_90%,#35502f_100%)]">
        <Svg w={12} h={12} className="ml-[347px]"><circle cx="8.500" cy="2.800" r="2.300" stroke="#fff" /><circle cx="3.500" cy="6" r="2" stroke="#fff" /><path d="M.5 12c0-5 6-5 6 0M6.500 6.500c2-2 5-1 5 2.500" stroke="#fff" /></Svg>
        <Svg w={10} h={6} className="ml-[17px]"><path d="m.5 5.500 4.500-5 4.500 5" stroke="#fff" strokeWidth="1.200" /></Svg>
        <Svg w={13} h={9} className="ml-[7px]"><path d="M4.500 2.500h7v5h-7z" fill="#fff" stroke="#fff" /><path d="M12.500 4v2M0 1.500h4M1 0v1M3 0v1M2 2v5h2" stroke="#fff" /></Svg>
        <Svg w={13} h={11} className="ml-[7px]"><path d="M.5 3.500h2.500l3-3v10l-3-3H.5z" stroke="#fff" /><path d="M8 3.500c1 1 1 3 0 4M9.700 2c2 2 2 5 0 7M11.400.500c2.500 3 2.500 7 0 10" stroke="#ddd" strokeWidth=".9" /></Svg>
        <Svg w={13} h={13} className="ml-[6px]"><path d="M11 12V2M8 12C8 9 9 7.500 11 7M5.500 12C5 7 8 4.500 11 4.500M3 9c1-4 4-7 8-7" stroke="#7e9178" /><circle cx="4" cy="9" r="3.800" fill="#d32630" /><path d="m2.500 7.500 3 3m0-3-3 3" stroke="#fff" /></Svg>
        <div className="ml-[7px]"><Fit w={19}>ENG</Fit></div>
        <div className="ml-[10px] flex w-[40px] flex-col items-center leading-[14px]"><Fit w={22}>11:36</Fit><Fit w={37}>2/7/2020</Fit></div>
        <Svg w={14} h={13} className="ml-[15px]"><path d="M.5.500h12v9H9.500l-2.500 3v-3H.5z" stroke="#fff" /></Svg>
      </div>
    </div>
  );
}

export default function App() {
  return (
    <div className={`flex h-[713px] w-[1268px] flex-col overflow-hidden bg-[#e6e6e6] ${UI}`}>
      <TitleArea />
      <Ribbon />
      <MessageBar />
      <FormulaBar />
      <Sheet />
      <SheetTabs />
      <StatusBar />
      <Taskbar />
    </div>
  );
}
